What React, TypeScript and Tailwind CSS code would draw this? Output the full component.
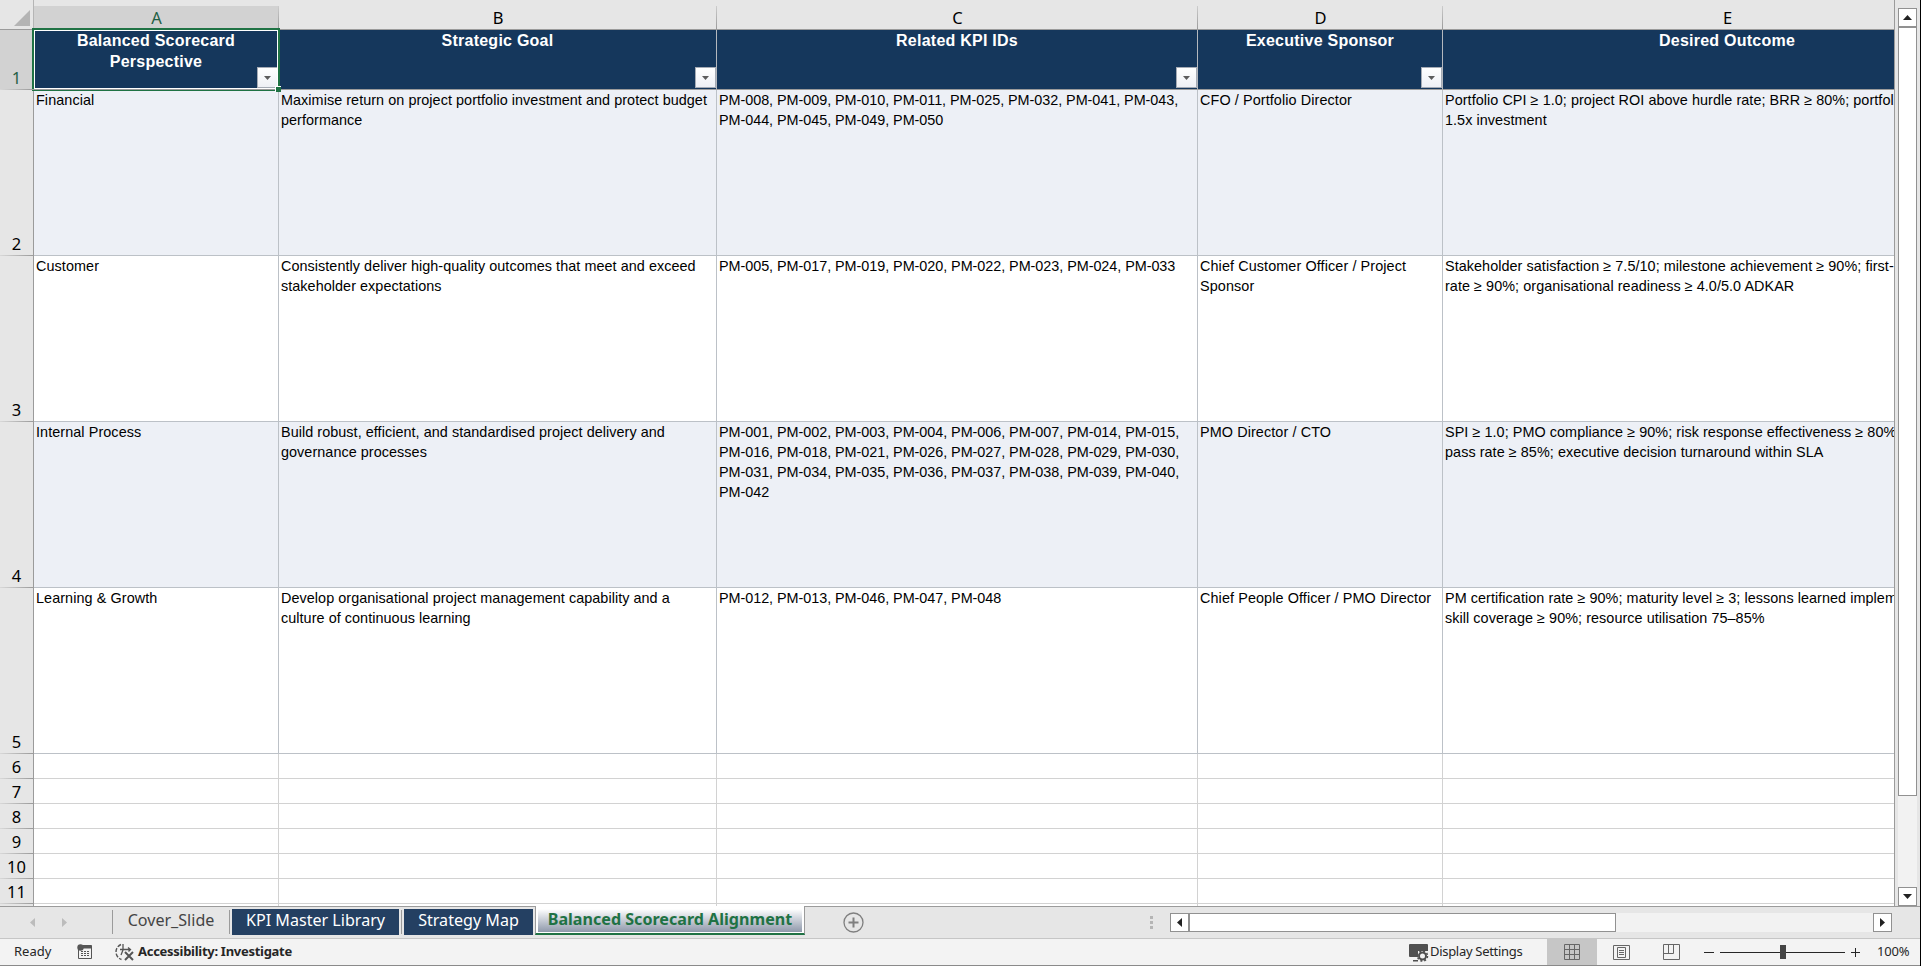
import React from "react";

interface Column {
    id: string;
    label: string[];
    width: string;
    spacing: string;
    filter: boolean;
}

const columns: Column[] = [
    { id: "A", label: ["Balanced Scorecard", "Perspective"], width: "w-[245px]", spacing: "tracking-[0.08px]", filter: true },
    { id: "B", label: ["Strategic Goal"], width: "w-[438px]", spacing: "tracking-[0.055px]", filter: true },
    { id: "C", label: ["Related KPI IDs"], width: "w-[481px]", spacing: "tracking-[-0.045px]", filter: true },
    { id: "D", label: ["Executive Sponsor"], width: "w-[245px]", spacing: "tracking-[0.1px]", filter: true },
    { id: "E", label: ["Desired Outcome"], width: "w-[569px]", spacing: "tracking-[0.06px]", filter: false },
];

const rows: string[][][] = [
    [
        ["Financial"],
        ["Maximise return on project portfolio investment and protect budget", "performance"],
        ["PM-008, PM-009, PM-010, PM-011, PM-025, PM-032, PM-041, PM-043,", "PM-044, PM-045, PM-049, PM-050"],
        ["CFO / Portfolio Director"],
        ["Portfolio CPI ≥ 1.0; project ROI above hurdle rate; BRR ≥ 80%; portfolio", "1.5x investment"],
    ],
    [
        ["Customer"],
        ["Consistently deliver high-quality outcomes that meet and exceed", "stakeholder expectations"],
        ["PM-005, PM-017, PM-019, PM-020, PM-022, PM-023, PM-024, PM-033"],
        ["Chief Customer Officer / Project", "Sponsor"],
        ["Stakeholder satisfaction ≥ 7.5/10; milestone achievement ≥ 90%; first-", "rate ≥ 90%; organisational readiness ≥ 4.0/5.0 ADKAR"],
    ],
    [
        ["Internal Process"],
        ["Build robust, efficient, and standardised project delivery and", "governance processes"],
        [
            "PM-001, PM-002, PM-003, PM-004, PM-006, PM-007, PM-014, PM-015,",
            "PM-016, PM-018, PM-021, PM-026, PM-027, PM-028, PM-029, PM-030,",
            "PM-031, PM-034, PM-035, PM-036, PM-037, PM-038, PM-039, PM-040,",
            "PM-042",
        ],
        ["PMO Director / CTO"],
        ["SPI ≥ 1.0; PMO compliance ≥ 90%; risk response effectiveness ≥ 80%", "pass rate ≥ 85%; executive decision turnaround within SLA"],
    ],
    [
        ["Learning & Growth"],
        ["Develop organisational project management capability and a", "culture of continuous learning"],
        ["PM-012, PM-013, PM-046, PM-047, PM-048"],
        ["Chief People Officer / PMO Director"],
        ["PM certification rate ≥ 90%; maturity level ≥ 3; lessons learned implem", "skill coverage ≥ 90%; resource utilisation 75–85%"],
    ],
];

const emptyRows = [6, 7, 8, 9, 10, 11];

const RowNumber: React.FC<{ n: number; active?: boolean }> = ({ n, active }) => (
    <div
        className={`relative flex w-[34px] shrink-0 items-end justify-center border-r border-[#9b9b9b] pb-px text-[16.5px] leading-[22px] ${
            active ? "bg-[#d2d2d2] text-[#1f6045]" : "bg-[#e6e6e6] text-black"
        }`}
    >
        {n}
        <div className="absolute bottom-0 left-0 h-px w-full bg-gradient-to-r from-[#d8d8d8] to-[#9b9b9b]" />
    </div>
);

const FilterButton = () => (
    <div className="absolute bottom-px right-0 flex h-[21px] w-[21px] items-center justify-center border border-[#a5abb5] bg-gradient-to-b from-white to-[#eef0f5]">
        <svg width="7" height="4" viewBox="0 0 7 4">
            <path d="M0 0h7L3.5 4z" fill="#5c5c5c" />
        </svg>
    </div>
);

const Sheet = () => (
    <div className="relative h-[906px] w-[1895px] shrink-0 overflow-hidden border-r border-[#9b9b9b] bg-white">
        {/* Column letters */}
        <div className="flex h-[30px] w-[2012px] border-b border-[#9b9b9b] bg-[#e6e6e6]">
            <div className="flex w-[34px] shrink-0 items-end justify-end border-r border-[#b5b5b5] pb-[3px] pr-[3px]">
                <svg width="16" height="16" viewBox="0 0 16 16">
                    <path d="M16 0v16H0z" fill="#b4b4b4" />
                </svg>
            </div>
            {columns.map((col, i) => (
                <div key={col.id} className={`${col.width} shrink-0 pt-[6px]`}>
                    <div
                        className={`relative h-[23px] text-center text-[16.5px] leading-[24px] ${
                            i === 0 ? "bg-[#d2d2d2] text-[#1f6045]" : "text-black"
                        }`}
                    >
                        {col.id}
                        <div className="absolute right-0 top-0 h-full w-px bg-gradient-to-b from-[#cccccc] to-[#9b9b9b]" />
                    </div>
                </div>
            ))}
        </div>

        {/* Header row */}
        <div className="flex h-[60px] w-[2012px]">
            <RowNumber n={1} active />
            {columns.map((col) => (
                <div
                    key={col.id}
                    className={`${col.width} relative shrink-0 border-b border-r border-b-[#9b9b9b] border-r-[#b4b8be] bg-[#15375c] text-center font-[Liberation_Sans,Arial,sans-serif] text-[16px] font-bold leading-[21px] tracking-[0.24px] text-white`}
                >
                    {col.label.map((line) => (
                        <div key={line}>{line}</div>
                    ))}
                    {col.filter && <FilterButton />}
                </div>
            ))}
        </div>

        {/* Data rows */}
        {rows.map((cells, r) => (
            <div key={r} className="flex h-[166px] w-[2012px]">
                <RowNumber n={r + 2} />
                {cells.map((lines, c) => (
                    <div
                        key={c}
                        className={`${columns[c].width} ${columns[c].spacing} shrink-0 overflow-hidden whitespace-nowrap border-b border-r border-[#bcc1c7] pl-[2px] font-[Liberation_Sans,Arial,sans-serif] text-[14.4px] leading-[20px] text-black ${
                            r % 2 === 0 ? "bg-[#edf0f6]" : "bg-white"
                        }`}
                    >
                        {lines.map((line) => (
                            <div key={line}>{line}</div>
                        ))}
                    </div>
                ))}
            </div>
        ))}

        {/* Empty rows */}
        {emptyRows.map((n) => (
            <div key={n} className="flex h-[25px] w-[2012px]">
                <RowNumber n={n} />
                {columns.map((col) => (
                    <div key={col.id} className={`${col.width} shrink-0 border-b border-r border-[#d2d2d2]`} />
                ))}
            </div>
        ))}
        <div className="flex h-[2px] w-[2012px]">
            <div className="w-[34px] shrink-0 border-r border-[#9b9b9b] bg-[#e6e6e6]" />
            {columns.map((col) => (
                <div key={col.id} className={`${col.width} shrink-0 border-r border-[#d2d2d2]`} />
            ))}
        </div>

        {/* Selected cell, the freeze line runs over its lower edge */}
        <div className="absolute left-[32px] top-[28px] h-[63px] w-[248px] border-2 border-[#1f7244]">
            <div className="h-full w-full border border-white" />
            <div className="absolute bottom-[-1px] left-[-2px] h-px w-[244px] bg-[#9b9b9b]" />
            <div className="absolute bottom-[-3px] right-[-3px] h-[6px] w-[6px] border-l border-t border-white bg-[#1f7244]" />
        </div>
    </div>
);

const VerticalScroll = () => (
    <div className="flex h-[906px] w-[22px] flex-col pl-[3px] pt-2">
        <div className="flex h-[19px] w-[19px] items-center justify-center border border-[#919191] bg-white">
            <svg width="9" height="5" viewBox="0 0 9 5">
                <path d="M4.5 0L9 5H0z" fill="#222" />
            </svg>
        </div>
        <div className="h-[769px] w-[19px] border border-[#919191] bg-white" />
        <div className="w-[19px] flex-1 bg-[#f2f2f2]" />
        <div className="flex h-[19px] w-[19px] items-center justify-center border border-[#919191] bg-white">
            <svg width="9" height="5" viewBox="0 0 9 5">
                <path d="M0 0h9L4.5 5z" fill="#222" />
            </svg>
        </div>
    </div>
);

const TabBar = () => (
    <div className="flex h-[32px] border-t border-[#9b9b9b] bg-[#e6e6e6] text-[16.1px]">
        <div className="flex w-[112px] shrink-0 items-center pl-[30px]">
            <svg width="38" height="9" viewBox="0 0 38 9">
                <path d="M5 0v9L0 4.5zM32 0v9l5-4.5z" fill="#bcbcbc" />
            </svg>
        </div>
        <div className="mt-[3px] h-[24px] w-[118px] shrink-0 border-x border-[#9b9b9b] text-center leading-[20px] text-[#444]">
            Cover_Slide
        </div>
        <div className="ml-[2px] mt-[2px] h-[26px] w-[167px] shrink-0 bg-[#244062] text-center leading-[22px] text-white">
            KPI Master Library
        </div>
        <div className="ml-[2px] mt-[3px] h-[24px] w-px bg-[#9b9b9b]" />
        <div className="ml-[2px] mt-[2px] h-[26px] w-[129px] shrink-0 bg-[#244062] text-center leading-[22px] text-white">
            Strategy Map
        </div>
        <div className="ml-[2px] mt-[-1px] h-[29px] w-[270px] shrink-0 border-x border-b-2 border-x-[#9b9b9b] border-b-[#1f7244] bg-white px-[2px] pb-px pt-[3px]">
            <div className="h-[23px] bg-gradient-to-b from-white to-[#8f99ab] text-center font-bold leading-[20px] text-[#1f7244]">
                Balanced Scorecard Alignment
            </div>
        </div>
        <svg className="ml-[38px] mt-[5px] shrink-0" width="21" height="21" viewBox="0 0 21 21" fill="none" stroke="#7f7f7f">
            <circle cx="10.5" cy="10.5" r="9.5" strokeWidth="1.3" />
            <path d="M10.5 5.5v10M5.5 10.5h10" strokeWidth="2" />
        </svg>
        <div className="ml-[286px] mt-[9px] flex w-[3px] shrink-0 flex-col gap-[2px]">
            <div className="h-[3px] bg-[#b5b5b5]" />
            <div className="h-[3px] bg-[#b5b5b5]" />
            <div className="h-[3px] bg-[#b5b5b5]" />
        </div>
        {/* Horizontal scroll */}
        <div className="ml-[17px] mt-[6px] flex h-[19px] w-[722px] shrink-0 bg-[#f2f2f2]">
            <div className="flex w-[19px] items-center justify-center border border-[#919191] bg-white">
                <svg width="5" height="9" viewBox="0 0 5 9">
                    <path d="M5 0v9L0 4.5z" fill="#222" />
                </svg>
            </div>
            <div className="w-[427px] border border-[#919191] bg-white" />
            <div className="flex-1" />
            <div className="flex w-[19px] items-center justify-center border border-[#919191] bg-white">
                <svg width="5" height="9" viewBox="0 0 5 9">
                    <path d="M0 0v9l5-4.5z" fill="#222" />
                </svg>
            </div>
        </div>
    </div>
);

const StatusBar = () => (
    <div className="flex h-[28px] items-center border-b border-t border-b-[#8a8a8a] border-t-[#c6c6c6] bg-[#f3f3f3] text-[13px] text-[#262626]">
        <div className="w-[77px] shrink-0 pl-[14px]">Ready</div>
        <svg className="shrink-0" width="16" height="16" viewBox="0 0 16 16" fill="none" stroke="#555">
            <path d="M1.5 5v9.5h13V1.5H6" />
            <path d="M6 3h8.5" strokeWidth="3" />
            <path d="M4 7.5h9M4 9.5h9M4 11.5h9" strokeDasharray="2 1" />
            <circle cx="3.5" cy="3.5" r="3.2" fill="#555" stroke="none" />
        </svg>
        <svg className="ml-[22px] shrink-0" width="20" height="18" viewBox="0 0 20 18" fill="none" stroke="#555">
            <path d="M6 1.5A8 8 0 0 0 6.5 16.5" strokeWidth="1.4" strokeDasharray="4 1.5" />
            <path d="M8 1v6M5 6.5h10M8 7l-2 5M13 4.5l2.5 2-2 2" strokeWidth="1.3" />
            <path d="M10 9l8 8M18 9l-8 8" strokeWidth="2" />
        </svg>
        <div className="ml-[3px] w-[1271px] shrink-0 font-bold tracking-[-0.28px]">Accessibility: Investigate</div>
        <svg className="shrink-0" width="20" height="19" viewBox="0 0 20 19">
            <path d="M1 1h17a1 1 0 0 1 1 1v6H9v6H1a1 1 0 0 1-1-1V2a1 1 0 0 1 1-1zM4 17h5v1.5H4z" fill="#505050" />
            <circle cx="13.5" cy="13" r="3.5" fill="none" stroke="#505050" strokeWidth="2" />
            <circle cx="13.5" cy="13" r="5" fill="none" stroke="#505050" strokeWidth="1.5" strokeDasharray="2 1.93" />
        </svg>
        <div className="ml-px w-[117px] shrink-0 tracking-[-0.3px]">Display Settings</div>
        <div className="flex h-full w-[50px] shrink-0 items-center justify-center bg-[#c6c6c6]">
            <svg width="16" height="16" viewBox="0 0 16 16" fill="none" stroke="#666">
                <path d="M.5.5h15v15H.5zM.5 5.5h15M.5 10.5h15M5.5.5v15M10.5.5v15" />
            </svg>
        </div>
        <svg className="ml-4 shrink-0" width="17" height="15" viewBox="0 0 17 15" fill="none" stroke="#666">
            <path d="M.5.5h16v14H.5zM4.5 2.5h8v10h-8zM6 5.5h5M6 7.5h5M6 9.5h5" />
        </svg>
        <svg className="ml-[33px] shrink-0" width="17" height="16" viewBox="0 0 17 16" fill="none" stroke="#666">
            <path d="M.5.5h16v15H.5zM.5 9.5h10V.5M5.5.5v9" />
        </svg>
        <div className="ml-6 h-px w-[10px] bg-[#262626]" />
        <div className="relative ml-[6px] h-px w-[125px] bg-[#262626]">
            <div className="absolute left-[60px] top-[-7px] h-[14px] w-[6px] bg-[#444]" />
        </div>
        <svg className="ml-[6px] shrink-0" width="9" height="9" viewBox="0 0 9 9" stroke="#262626">
            <path d="M0 4.5h9M4.5 0v9" />
        </svg>
        <div className="ml-[17px] tracking-[-0.2px]">100%</div>
    </div>
);

const App: React.FC = () => {
    return (
        <div className="h-[966px] w-[1921px] overflow-hidden border-r border-black bg-[#e6e6e6] font-[Noto_Sans,sans-serif]">
            <div className="flex">
                <Sheet />
                <VerticalScroll />
            </div>
            <TabBar />
            <StatusBar />
        </div>
    );
};

export default App;
